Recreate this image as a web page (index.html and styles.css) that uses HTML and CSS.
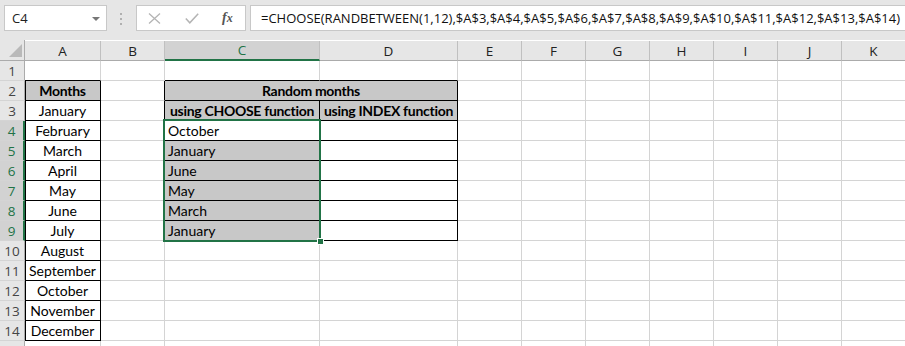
FILE: index.html
```html
<!DOCTYPE html>
<html>
<head>
<meta charset="utf-8">
<link rel="stylesheet" href="styles.css">
</head>
<body>
<div class="app">
  <div class="toolbar">
    <div class="namebox">
      <span class="ref">C4</span>
      <svg class="dd" width="8" height="4" viewBox="0 0 8 4"><path d="M0 0H8L4 4Z" fill="#777"/></svg>
    </div>
    <svg class="dots" width="3" height="12" viewBox="0 0 3 12"><rect x="0" y="0" width="2" height="2" fill="#b0b0b0"/><rect x="0" y="5" width="2" height="2" fill="#b0b0b0"/><rect x="0" y="10" width="2" height="2" fill="#b0b0b0"/></svg>
    <div class="fxbox">
      <svg class="ico" width="13" height="11" viewBox="0 0 13 11"><path d="M1 0.5L12 10.5M12 0.5L1 10.5" stroke="#b4b4b4" stroke-width="1.3" fill="none"/></svg>
      <svg class="ico" width="14" height="11" viewBox="0 0 14 11"><path d="M0.8 5.5L4.8 9.8L13.2 0.8" stroke="#b4b4b4" stroke-width="1.5" fill="none"/></svg>
      <span class="fx">f<span class="fxx">x</span></span>
    </div>
    <div class="formula">=CHOOSE(RANDBETWEEN(1,12),$A$3,$A$4,$A$5,$A$6,$A$7,$A$8,$A$9,$A$10,$A$11,$A$12,$A$13,$A$14)</div>
  </div>

  <div class="sheet">
    <!-- header -->
    <div class="corner"><svg width="14" height="15" viewBox="0 0 14 15"><path d="M13 1V14H0Z" fill="#b9b9b9"/></svg></div>
    <div class="ch">A</div><div class="ch">B</div><div class="ch sel">C</div><div class="ch">D</div><div class="ch">E</div><div class="ch">F</div><div class="ch">G</div><div class="ch">H</div><div class="ch">I</div><div class="ch">J</div><div class="ch">K</div>

    <!-- row 1 -->
    <div class="rh">1</div>
    <div class="c bb"></div><div class="c"></div><div class="c bb"></div><div class="c bb"></div><div class="c"></div><div class="c"></div><div class="c"></div><div class="c"></div><div class="c"></div><div class="c"></div><div class="c"></div>

    <!-- row 2 -->
    <div class="rh">2</div>
    <div class="c ac g b bb br bl">Months</div><div class="c br"></div><div class="c ac g b bb br span2">Random months</div><div class="c"></div><div class="c"></div><div class="c"></div><div class="c"></div><div class="c"></div><div class="c"></div><div class="c"></div>

    <!-- row 3 -->
    <div class="rh">3</div>
    <div class="c ac bb br bl">January</div><div class="c br"></div><div class="c ac g b bb br">using CHOOSE function</div><div class="c ac g b bb br">using INDEX function</div><div class="c"></div><div class="c"></div><div class="c"></div><div class="c"></div><div class="c"></div><div class="c"></div><div class="c"></div>

    <!-- row 4 -->
    <div class="rh sel">4</div>
    <div class="c ac bb br bl">February</div><div class="c br"></div><div class="c bb br">October</div><div class="c bb br"></div><div class="c"></div><div class="c"></div><div class="c"></div><div class="c"></div><div class="c"></div><div class="c"></div><div class="c"></div>

    <!-- row 5 -->
    <div class="rh sel">5</div>
    <div class="c ac bb br bl">March</div><div class="c br"></div><div class="c g bb br">January</div><div class="c bb br"></div><div class="c"></div><div class="c"></div><div class="c"></div><div class="c"></div><div class="c"></div><div class="c"></div><div class="c"></div>

    <!-- row 6 -->
    <div class="rh sel">6</div>
    <div class="c ac bb br bl">April</div><div class="c br"></div><div class="c g bb br">June</div><div class="c bb br"></div><div class="c"></div><div class="c"></div><div class="c"></div><div class="c"></div><div class="c"></div><div class="c"></div><div class="c"></div>

    <!-- row 7 -->
    <div class="rh sel">7</div>
    <div class="c ac bb br bl">May</div><div class="c br"></div><div class="c g bb br">May</div><div class="c bb br"></div><div class="c"></div><div class="c"></div><div class="c"></div><div class="c"></div><div class="c"></div><div class="c"></div><div class="c"></div>

    <!-- row 8 -->
    <div class="rh sel">8</div>
    <div class="c ac bb br bl">June</div><div class="c br"></div><div class="c g bb br">March</div><div class="c bb br"></div><div class="c"></div><div class="c"></div><div class="c"></div><div class="c"></div><div class="c"></div><div class="c"></div><div class="c"></div>

    <!-- row 9 -->
    <div class="rh sel">9</div>
    <div class="c ac bb br bl">July</div><div class="c br"></div><div class="c g bb br">January</div><div class="c bb br"></div><div class="c"></div><div class="c"></div><div class="c"></div><div class="c"></div><div class="c"></div><div class="c"></div><div class="c"></div>

    <!-- row 10 -->
    <div class="rh">10</div>
    <div class="c ac bb br bl">August</div><div class="c"></div><div class="c"></div><div class="c"></div><div class="c"></div><div class="c"></div><div class="c"></div><div class="c"></div><div class="c"></div><div class="c"></div><div class="c"></div>

    <!-- row 11 -->
    <div class="rh">11</div>
    <div class="c ac bb br bl">September</div><div class="c"></div><div class="c"></div><div class="c"></div><div class="c"></div><div class="c"></div><div class="c"></div><div class="c"></div><div class="c"></div><div class="c"></div><div class="c"></div>

    <!-- row 12 -->
    <div class="rh">12</div>
    <div class="c ac bb br bl">October</div><div class="c"></div><div class="c"></div><div class="c"></div><div class="c"></div><div class="c"></div><div class="c"></div><div class="c"></div><div class="c"></div><div class="c"></div><div class="c"></div>

    <!-- row 13 -->
    <div class="rh">13</div>
    <div class="c ac bb br bl">November</div><div class="c"></div><div class="c"></div><div class="c"></div><div class="c"></div><div class="c"></div><div class="c"></div><div class="c"></div><div class="c"></div><div class="c"></div><div class="c"></div>

    <!-- row 14 -->
    <div class="rh">14</div>
    <div class="c ac bb br bl">December</div><div class="c"></div><div class="c"></div><div class="c"></div><div class="c"></div><div class="c"></div><div class="c"></div><div class="c"></div><div class="c"></div><div class="c"></div><div class="c"></div>

    <!-- row 15 (partially visible) -->
    <div class="rh"></div>
    <div class="c"></div><div class="c"></div><div class="c"></div><div class="c"></div><div class="c"></div><div class="c"></div><div class="c"></div><div class="c"></div><div class="c"></div><div class="c"></div><div class="c"></div>

    <div class="selbox"><div class="handle"></div></div>
  </div>
</div>
</body>
</html>
```

FILE: styles.css
```css
html, body {
  margin: 0;
  padding: 0;
  background: #fff;
}
.app {
  width: 905px;
  height: 346px;
  overflow: hidden;
  background: #fff;
}
.toolbar {
  height: 40px;
  box-sizing: border-box;
  background: #e6e6e6;
  display: flex;
  align-items: flex-start;
  padding: 5px 0 0 4px;
}
.namebox {
  width: 103px;
  height: 26px;
  box-sizing: border-box;
  background: #fff;
  border: 1px solid #c8c8c8;
  display: flex;
  align-items: center;
  justify-content: space-between;
  padding: 0 6px 0 7px;
  font-family: "Open Sans", "Liberation Sans", sans-serif;
  font-size: 13px;
  color: #222;
}
.dd { margin-top: 1px; }
.dots {
  margin: 8px 0 0 13px;
}
.fxbox {
  width: 110px;
  height: 26px;
  box-sizing: border-box;
  margin-left: 13px;
  background: #fff;
  border: 1px solid #c8c8c8;
  display: flex;
  align-items: center;
  padding-left: 11px;
  gap: 24px;
}
.fx {
  font-family: "Liberation Serif", "DejaVu Serif", serif;
  font-style: italic;
  font-weight: bold;
  font-size: 14px;
  color: #555;
  margin-left: -1px;
}
.fxx { font-size: 12px; }
.formula {
  flex: 1;
  height: 26px;
  box-sizing: border-box;
  margin-left: 4px;
  margin-right: -2px;
  background: #fff;
  border: 1px solid #c8c8c8;
  font-family: "Open Sans", "Liberation Sans", sans-serif;
  font-size: 13px;
  line-height: 24px;
  padding-left: 10px;
  color: #111;
  white-space: nowrap;
  overflow: hidden;
}

.sheet {
  position: relative;
  display: grid;
  grid-template-columns: 25px 76px 64px 155px 138px 64px 64px 64px 64px 64px 64px 64px;
  grid-template-rows: 21px repeat(15, 20px);
}
.corner {
  background: #e6e6e6;
  border-right: 1px solid #ababab;
  border-bottom: 1px solid #ababab;
  box-sizing: border-box;
  display: flex;
  align-items: flex-end;
  justify-content: flex-end;
  padding: 0 1px 2px 0;
}
.corner svg { display: block; }
.ch {
  background: #e6e6e6;
  border-right: 1px solid #c0c0c0;
  border-bottom: 1px solid #ababab;
  box-sizing: border-box;
  margin-top: 1px;
  display: flex;
  align-items: center;
  justify-content: center;
  font-family: "Open Sans", "Liberation Sans", sans-serif;
  font-size: 13.5px;
  color: #222;
}
.ch.sel {
  background: #d2d2d2;
  color: #217346;
  border-bottom: 2px solid #217346;
}
.rh {
  background: #e6e6e6;
  border-right: 1px solid #ababab;
  border-bottom: 1px solid #d4d4d4;
  box-sizing: border-box;
  display: flex;
  align-items: center;
  justify-content: center;
  font-family: "Open Sans", "Liberation Sans", sans-serif;
  font-size: 13.5px;
  color: #444;
}
.rh.sel {
  background: #d2d2d2;
  color: #217346;
  border-right: 2px solid #217346;
}
.c {
  border-right: 1px solid #d4d4d4;
  border-bottom: 1px solid #d4d4d4;
  box-sizing: border-box;
  display: flex;
  align-items: flex-end;
  padding: 0 0 0 3px;
  font-family: "Lato", "Liberation Sans", sans-serif;
  font-size: 14px;
  line-height: 18px;
  color: #000;
  white-space: nowrap;
}
.c.ac { justify-content: center; padding-left: 0; }
.c.b { font-weight: bold; letter-spacing: -0.3px; }
.c.g { background: #c8c8c8; }
.c.bb { border-bottom-color: #000; }
.c.br { border-right-color: #000; }
.c.bl { box-shadow: inset 1px 0 0 #000; }
.span2 { grid-column: span 2; }

.selbox {
  position: absolute;
  left: 163px;
  top: 79px;
  width: 158px;
  height: 123px;
  box-sizing: border-box;
  border: 2px solid #217346;
}
.handle {
  position: absolute;
  right: -5px;
  bottom: -5px;
  width: 5px;
  height: 5px;
  background: #217346;
  border: 1px solid #fff;
}
```
